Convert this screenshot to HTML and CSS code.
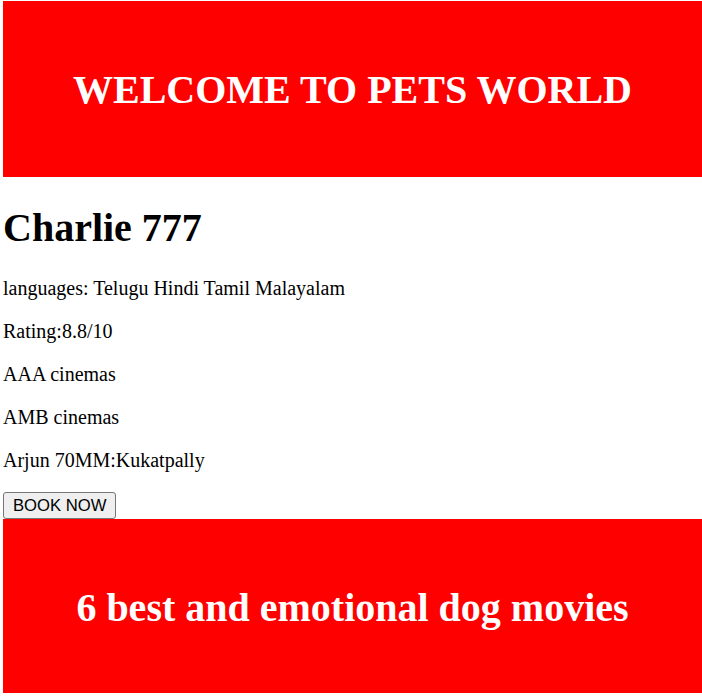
FILE: index.html
```html
<!DOCTYPE html>
<html>
<head>
<meta charset="utf-8">
<link rel="stylesheet" href="styles.css">
</head>
<body>
<div class="banner banner-top"><h1 class="banner-title">WELCOME TO PETS WORLD</h1></div>
<h1 class="movie-title">Charlie 777</h1>
<p class="info">languages: Telugu Hindi Tamil Malayalam</p>
<p class="info">Rating:8.8/10</p>
<p class="info">AAA cinemas</p>
<p class="info">AMB cinemas</p>
<p class="info">Arjun 70MM:Kukatpally</p>
<button class="book">BOOK NOW</button>
<div class="banner banner-bottom"><h1 class="banner-title">6 best and emotional dog movies</h1></div>
</body>
</html>
```
FILE: styles.css
```css
html, body {
  background: #fff;
}
body {
  margin: 1px 0 0 3px;
  font-family: "Liberation Serif", "Times New Roman", serif;
  font-size: 20px;
  color: #000;
}
.banner {
  background: #ff0000;
  display: flex;
  align-items: center;
  justify-content: center;
}
.banner-top {
  height: 176px;
}
.banner-bottom {
  height: 174px;
  padding-top: 3px;
  box-sizing: border-box;
}
.banner-title {
  margin: 0;
  color: #fff;
  font-size: 40px;
  font-weight: bold;
  text-align: center;
}
.movie-title {
  font-size: 40px;
  font-weight: bold;
  margin: 26.6px 0 26.6px;
}
.info {
  margin: 20px 0;
}
.book {
  display: block;
  height: 27px;
  padding: 0 9px;
  font-family: "Liberation Sans", Arial, sans-serif;
  font-size: 16.67px;
  color: #000;
  background: #efefef;
  border: 1px solid #767676;
  border-radius: 3px;
}
```
